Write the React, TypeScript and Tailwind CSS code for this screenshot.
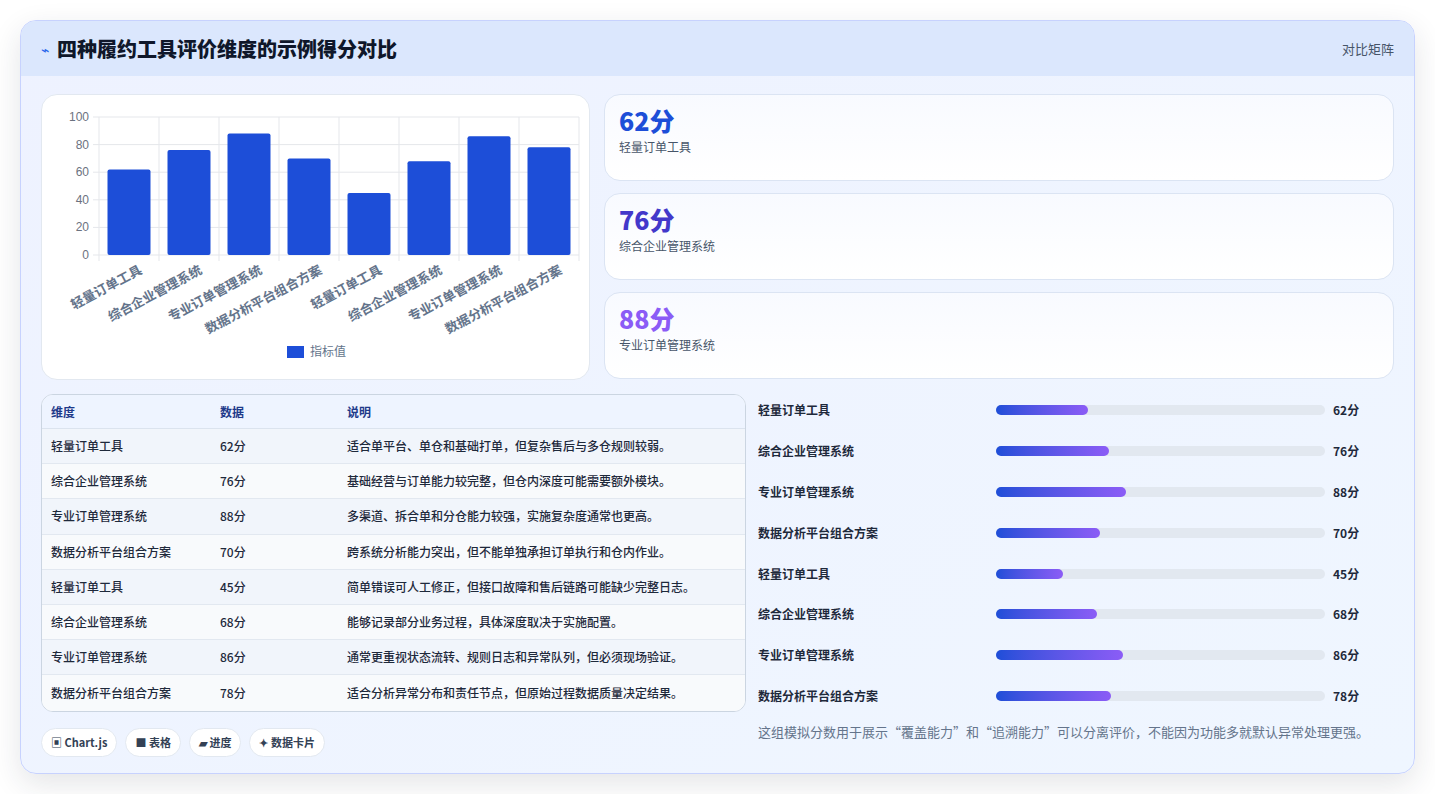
const rows = [
  { name: "轻量订单工具", v: 62, note: "适合单平台、单仓和基础打单，但复杂售后与多仓规则较弱。" },
  { name: "综合企业管理系统", v: 76, note: "基础经营与订单能力较完整，但仓内深度可能需要额外模块。" },
  { name: "专业订单管理系统", v: 88, note: "多渠道、拆合单和分仓能力较强，实施复杂度通常也更高。" },
  { name: "数据分析平台组合方案", v: 70, note: "跨系统分析能力突出，但不能单独承担订单执行和仓内作业。" },
  { name: "轻量订单工具", v: 45, note: "简单错误可人工修正，但接口故障和售后链路可能缺少完整日志。" },
  { name: "综合企业管理系统", v: 68, note: "能够记录部分业务过程，具体深度取决于实施配置。" },
  { name: "专业订单管理系统", v: 86, note: "通常更重视状态流转、规则日志和异常队列，但必须现场验证。" },
  { name: "数据分析平台组合方案", v: 78, note: "适合分析异常分布和责任节点，但原始过程数据质量决定结果。" },
];

const font = { fontFamily: '"Noto Sans CJK SC", "Noto Sans", sans-serif' };

function Chart() {
  const x0 = 57, x1 = 537, yTop = 22, yBot = 160;
  const step = (x1 - x0) / 8;
  const y = (v: number) => yBot - ((yBot - yTop) * v) / 100;
  return (
    <svg width="549" height="286" viewBox="0 0 549 286" style={font}>
      {[0, 20, 40, 60, 80, 100].map((t) => (
        <g key={t}>
          <line x1={x0 - 6} x2={x1} y1={y(t)} y2={y(t)} stroke="#e5e7eb" />
          <text x={x0 - 10} y={y(t) + 4} fontSize="12" fill="#6b7280" textAnchor="end" fontFamily="Liberation Sans, sans-serif">{t}</text>
        </g>
      ))}
      {Array.from({ length: 9 }).map((_, i) => (
        <line key={i} x1={x0 + i * step} x2={x0 + i * step} y1={yTop} y2={yBot + 6} stroke="#e5e7eb" />
      ))}
      {rows.map((r, i) => {
        const cx = x0 + step * (i + 0.5);
        return (
          <g key={i}>
            <rect x={cx - 21.5} y={y(r.v)} width="43" height={yBot - y(r.v)} rx="2" fill="#1d4ed8" />
            <text x={cx + 14} y={yBot + 18} fontSize="13" fontWeight="700" fill="#64748b" textAnchor="end" transform={`rotate(-28 ${cx + 14} ${yBot + 18})`}>{r.name}</text>
          </g>
        );
      })}
      <rect x="245" y="251" width="17" height="12" fill="#1d4ed8" />
      <text x="268" y="261" fontSize="12" fill="#64748b">指标值</text>
    </svg>
  );
}

const stats = [
  { v: "62分", n: "轻量订单工具", c: "text-[#1d4ed8]" },
  { v: "76分", n: "综合企业管理系统", c: "text-[#4338ca]" },
  { v: "88分", n: "专业订单管理系统", c: "text-[#8b5cf6]" },
];

export default function App() {
  return (
    <div className="min-h-screen bg-white p-5" style={font}>
      <div className="w-[1395px] h-[754px] rounded-2xl border border-[#c7d2fe] bg-gradient-to-br from-[#eef2ff] to-[#eff6ff] shadow-[0_10px_30px_rgba(30,41,59,0.12)] overflow-hidden">
        <div className="h-[55px] bg-[#dbe7fd] flex items-center justify-between px-5">
          <div className="flex items-center gap-2">
            <span className="text-[#2563eb] text-sm">⌁</span>
            <span className="text-[20px] font-extrabold text-[#0f172a]">四种履约工具评价维度的示例得分对比</span>
          </div>
          <span className="text-[13px] text-[#475569]">对比矩阵</span>
        </div>
        <div className="px-5 pt-[18px]">
          <div className="flex gap-[14px]">
            <div className="w-[549px] h-[286px] bg-white rounded-2xl border border-[#e2e8f0]">
              <Chart />
            </div>
            <div className="flex-1 flex flex-col gap-3">
              {stats.map((s) => (
                <div key={s.v} className="h-[87px] rounded-2xl border border-[#dbe4f3] bg-gradient-to-b from-[#f8faff] to-white px-[14px] pt-[8px]">
                  <div className={`text-[25px] font-extrabold leading-[34px] ${s.c}`}>{s.v}</div>
                  <div className="text-xs text-[#475569] mt-0.5">{s.n}</div>
                </div>
              ))}
            </div>
          </div>
          <div className="flex gap-3 mt-[14px]">
            <div className="w-[705px]">
              <div className="rounded-xl border border-[#cbd5e1] overflow-hidden bg-white">
                <div className="flex h-[34px] items-center bg-[#eef4ff] border-b border-[#dbe3ee] text-xs font-semibold text-[#1e3a8a]">
                  <span className="w-[178px] pl-[9px]">维度</span>
                  <span className="w-[127px]">数据</span>
                  <span>说明</span>
                </div>
                {rows.map((r, i) => (
                  <div key={i} className={`flex h-[35.2px] items-center text-xs font-medium text-[#1e293b] border-b last:border-b-0 border-[#e2e8f0] ${i % 2 ? "bg-[#f8fafc]" : "bg-[#f1f5fb]"}`}>
                    <span className="w-[178px] pl-[9px]">{r.name}</span>
                    <span className="w-[127px]">{r.v}分</span>
                    <span>{r.note}</span>
                  </div>
                ))}
              </div>
              <div className="flex gap-2 mt-4 text-[11px] font-semibold text-[#334155]">
                {["▣ Chart.js", "■ 表格", "▰ 进度", "✦ 数据卡片"].map((t) => (
                  <span key={t} className="h-[29px] px-[9px] flex items-center rounded-full bg-white border border-[#e2e8f0]">{t}</span>
                ))}
              </div>
            </div>
            <div className="flex-1 -mt-1">
              <div className="flex flex-col">
                {rows.map((r, i) => (
                  <div key={i} className="h-[40.8px] flex items-center text-xs font-semibold text-[#1e293b]">
                    <span className="w-[238px]">{r.name}</span>
                    <div className="w-[329px] h-[10px] rounded-full bg-[#e2e8f0]">
                      <div className="h-full rounded-full bg-gradient-to-r from-[#1d4ed8] to-[#8b5cf6]" style={{ width: `${r.v * 0.45}%` }} />
                    </div>
                    <span className="ml-2">{r.v}分</span>
                  </div>
                ))}
              </div>
              <p className="mt-1.5 text-[13px] text-[#64748b]">这组模拟分数用于展示“覆盖能力”和“追溯能力”可以分离评价，不能因为功能多就默认异常处理更强。</p>
            </div>
          </div>
        </div>
      </div>
    </div>
  );
}
